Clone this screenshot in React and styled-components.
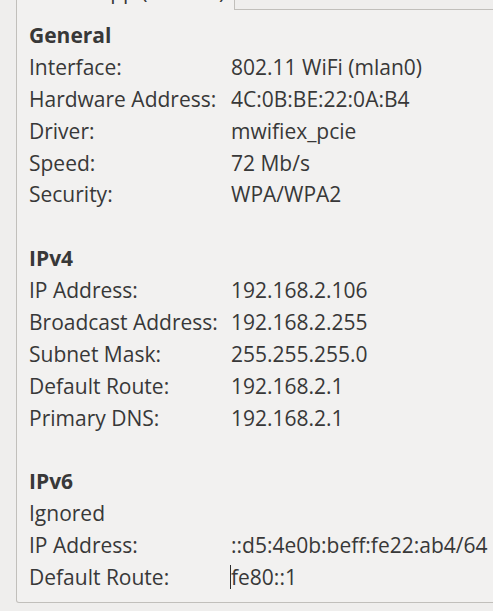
import styled, { createGlobalStyle } from "styled-components";

const GlobalStyle = createGlobalStyle`
  html, body {
    margin: 0;
    padding: 0;
    background: #efeeed;
    overflow: hidden;
  }
  body {
    font-family: "Open Sans", "Noto Sans", sans-serif;
    color: #383838;
  }
`;

const sections = [
  {
    title: "General",
    rows: [
      ["Interface:", "802.11 WiFi (mlan0)"],
      ["Hardware Address:", "4C:0B:BE:22:0A:B4"],
      ["Driver:", "mwifiex_pcie"],
      ["Speed:", "72 Mb/s"],
      ["Security:", "WPA/WPA2"],
    ],
  },
  {
    title: "IPv4",
    rows: [
      ["IP Address:", "192.168.2.106"],
      ["Broadcast Address:", "192.168.2.255"],
      ["Subnet Mask:", "255.255.255.0"],
      ["Default Route:", "192.168.2.1"],
      ["Primary DNS:", "192.168.2.1"],
    ],
  },
  {
    title: "IPv6",
    note: "Ignored",
    rows: [
      ["IP Address:", "::d5:4e0b:beff:fe22:ab4/64"],
      ["Default Route:", "fe80::1", true],
    ],
  },
];

export default function App() {
  return (
    <>
      <GlobalStyle />
      <Page>
        <TabBar>
          <Tab>WLAN Lipp (Default)</Tab>
          <TabFill />
        </TabBar>
        <Panel>
          {sections.map((section, idx) => (
            <Section key={idx} $last={idx === sections.length - 1}>
              <Heading>{section.title}</Heading>
              {section.note && <Note>{section.note}</Note>}
              {section.rows.map(([label, value, caret]) => (
                <Row key={label}>
                  <Label>{label}</Label>
                  <Value>
                    {caret && <Caret />}
                    {value}
                  </Value>
                </Row>
              ))}
            </Section>
          ))}
        </Panel>
      </Page>
    </>
  );
}

const Page = styled.div`
  padding-left: 16px;
  margin-right: -24px;
  margin-top: -26px;
`;

const TabBar = styled.div`
  display: flex;
  align-items: stretch;
  height: 36px;
`;

const Tab = styled.div`
  width: 219px;
  box-sizing: border-box;
  border: 1px solid #c1bfbb;
  border-bottom: none;
  background: #f2f1f0;
  font-size: 21px;
  line-height: 24px;
  padding: 4px 0 0 12px;
  white-space: nowrap;
  overflow: hidden;
`;

const TabFill = styled.div`
  flex: 1;
  border-bottom: 1px solid #c1bfbb;
  background: #efeeed;
`;

const Panel = styled.div`
  border: 1px solid #c1bfbb;
  border-top: none;
  border-bottom-left-radius: 3px;
  background: #f2f1f0;
  padding: 9px 0 9px 12px;
`;

const Section = styled.div`
  margin-bottom: ${(p) => (p.$last ? "0" : "31.9px")};
`;

const Line = styled.div`
  height: 31.9px;
  display: flex;
  align-items: center;
  font-size: 21px;
  white-space: nowrap;
`;

const Heading = styled(Line)`
  font-weight: 700;
`;

const Note = styled(Line)``;

const Row = styled(Line)`
  display: grid;
  grid-template-columns: 202px 1fr;
  align-items: center;
`;

const Label = styled.span``;

const Value = styled.span`
  position: relative;
`;

const Caret = styled.span`
  position: absolute;
  left: -1px;
  top: 2px;
  height: 24px;
  width: 1px;
  background: #2e2e2e;
`;
